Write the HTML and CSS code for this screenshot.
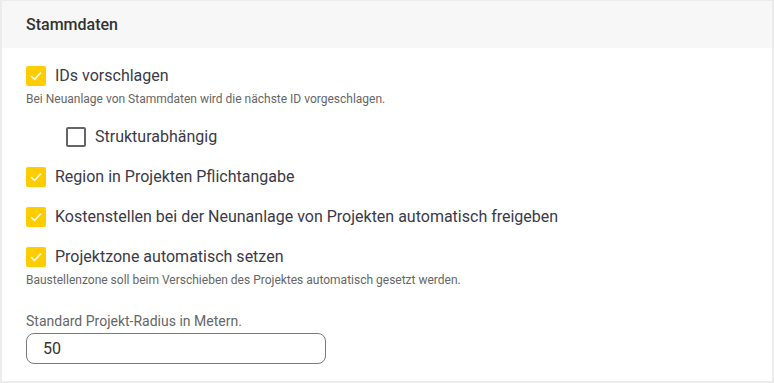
FILE: index.html
```html
<!DOCTYPE html>
<html lang="de">
<head>
    <meta charset="UTF-8">
    <meta name="viewport" content="width=device-width, initial-scale=1.0">
    <title>Stammdaten</title>
    <link rel="stylesheet" href="styles.css">
</head>
<body>
    <div class="card">
        <div class="card-header">Stammdaten</div>

        <div class="card-body">
            <div class="option">
                <label class="check-row">
                    <span class="box checked">
                        <svg viewBox="0 0 20 20" width="20" height="20"><polyline points="5.5,10.5 8.5,13.5 14.5,7" /></svg>
                    </span>
                    <span class="check-label">IDs vorschlagen</span>
                </label>
                <div class="hint">Bei Neuanlage von Stammdaten wird die nächste ID vorgeschlagen.</div>
            </div>

            <div class="option nested">
                <label class="check-row">
                    <span class="box"></span>
                    <span class="check-label">Strukturabhängig</span>
                </label>
            </div>

            <div class="option">
                <label class="check-row">
                    <span class="box checked">
                        <svg viewBox="0 0 20 20" width="20" height="20"><polyline points="5.5,10.5 8.5,13.5 14.5,7" /></svg>
                    </span>
                    <span class="check-label">Region in Projekten Pflichtangabe</span>
                </label>
            </div>

            <div class="option">
                <label class="check-row">
                    <span class="box checked">
                        <svg viewBox="0 0 20 20" width="20" height="20"><polyline points="5.5,10.5 8.5,13.5 14.5,7" /></svg>
                    </span>
                    <span class="check-label">Kostenstellen bei der Neunanlage von Projekten automatisch freigeben</span>
                </label>
            </div>

            <div class="option">
                <label class="check-row">
                    <span class="box checked">
                        <svg viewBox="0 0 20 20" width="20" height="20"><polyline points="5.5,10.5 8.5,13.5 14.5,7" /></svg>
                    </span>
                    <span class="check-label">Projektzone automatisch setzen</span>
                </label>
                <div class="hint">Baustellenzone soll beim Verschieben des Projektes automatisch gesetzt werden.</div>
            </div>

            <div class="field">
                <div class="field-label">Standard Projekt-Radius in Metern.</div>
                <div class="input">50</div>
            </div>
        </div>
    </div>
</body>
</html>
```

FILE: styles.css
```css
body {
    font-family: Roboto, "Noto Sans", Arial, sans-serif;
    background-color: #ececec;
    margin: 0;
    padding: 0;
    color: #333;
}

.card {
    margin: 1px 2px 2px 2px;
    background-color: #fff;
}

.card-header {
    height: 47px;
    display: flex;
    align-items: center;
    padding: 0 24px;
    background-color: #f7f7f7;
    font-size: 16px;
    font-weight: 500;
    color: #333;
}

.card-body {
    padding: 18px 24px 17px 24px;
}

.option {
    margin-bottom: 20px;
}

.option.nested {
    padding-left: 40px;
}

.check-row {
    display: flex;
    align-items: center;
    height: 20px;
    cursor: pointer;
}

.box {
    width: 20px;
    height: 20px;
    box-sizing: border-box;
    border: 2px solid #666;
    border-radius: 2px;
    flex-shrink: 0;
}

.box.checked {
    border: none;
    background-color: #ffcc00;
}

.box svg {
    display: block;
    fill: none;
    stroke: #fff;
    stroke-width: 1.6;
    stroke-linecap: round;
    stroke-linejoin: round;
}

.check-label {
    margin-left: 9px;
    font-size: 16px;
    line-height: 20px;
    color: #3a3a48;
}

.hint {
    margin-top: 5px;
    font-size: 12px;
    line-height: 16px;
    color: #666;
}

.field {
    padding-top: 5px;
}

.field-label {
    font-size: 14px;
    line-height: 16px;
    color: #666;
    margin-bottom: 4px;
}

.input {
    width: 300px;
    height: 31px;
    box-sizing: border-box;
    border: 1px solid #7a7a7a;
    border-radius: 8px;
    padding: 0 16px;
    display: flex;
    align-items: center;
    font-size: 16px;
    color: #333;
}
```
